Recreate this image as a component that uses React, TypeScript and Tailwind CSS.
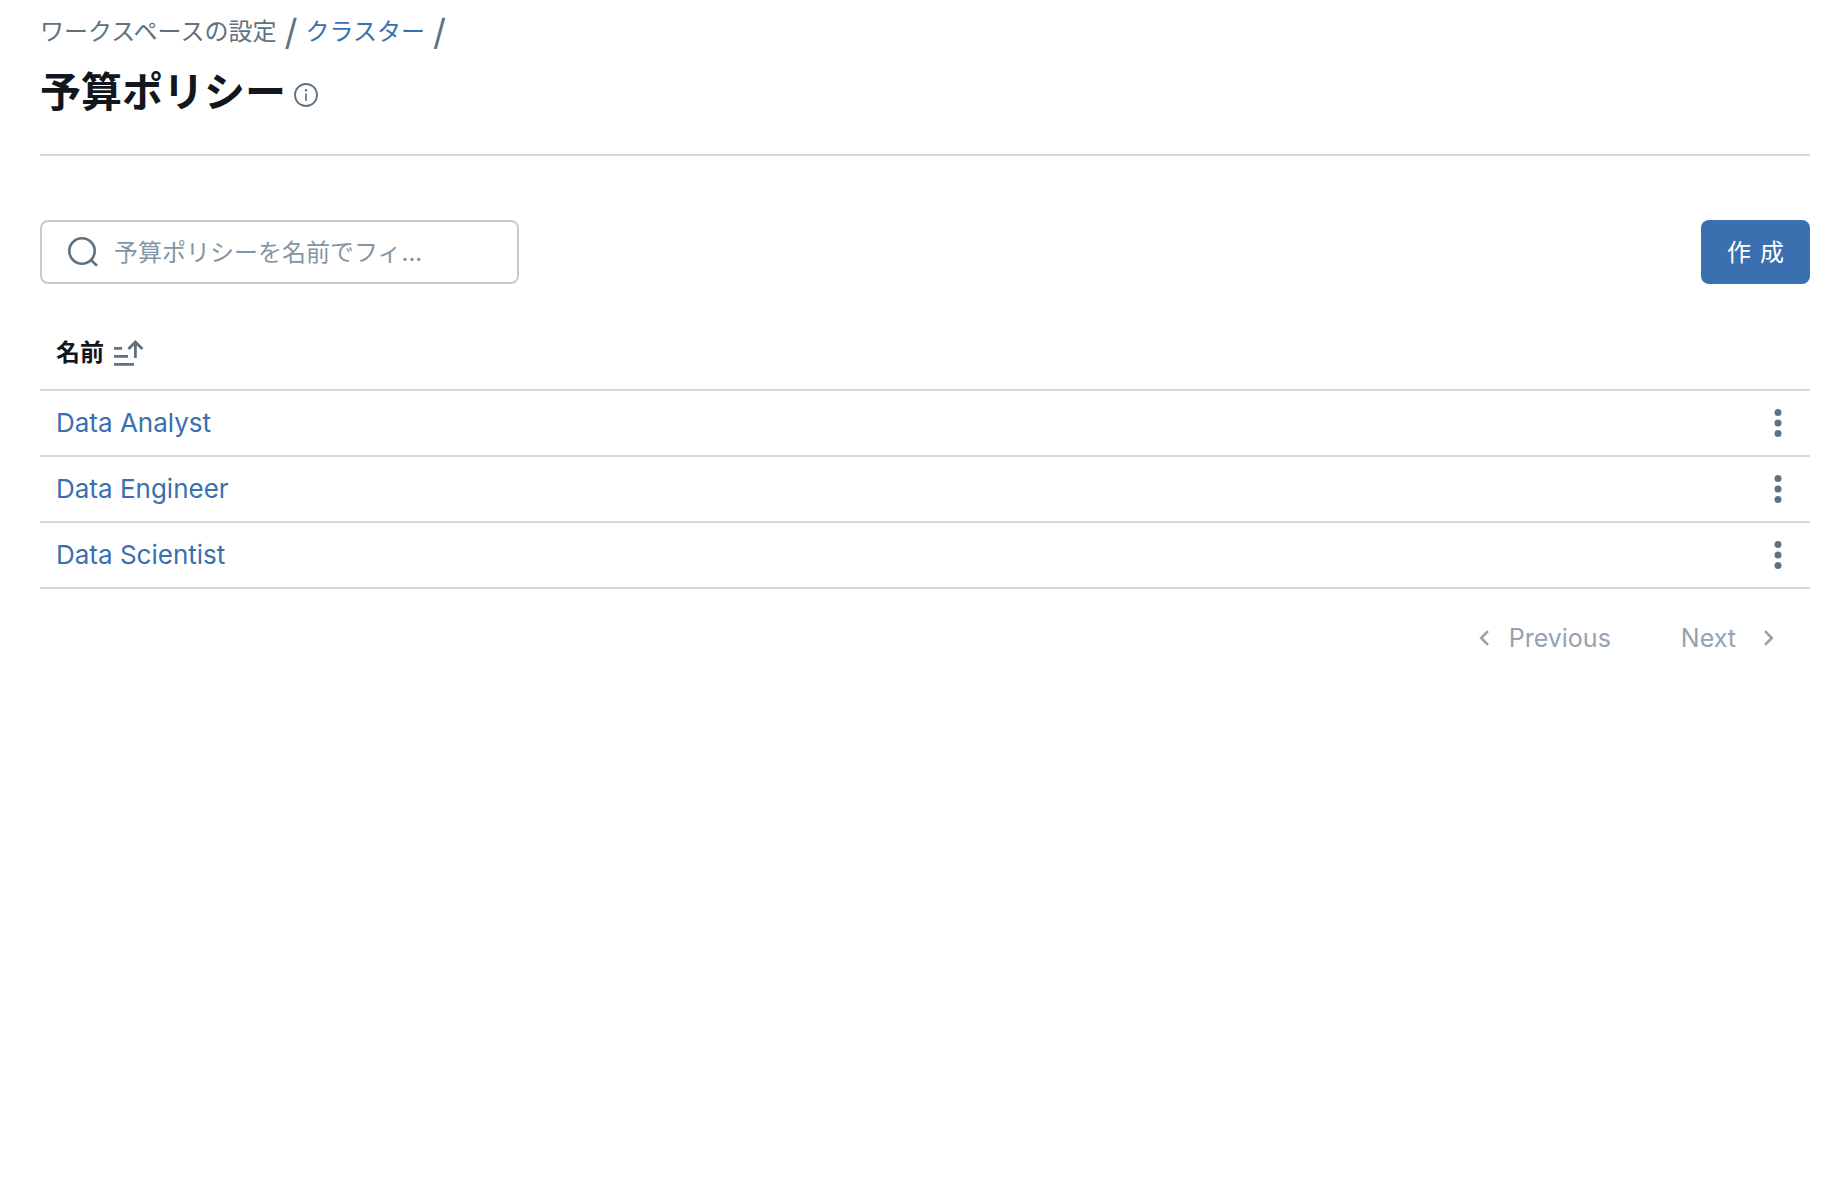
import { useState } from "react";

const policies = [
  { id: 1, name: "Data Analyst" },
  { id: 2, name: "Data Engineer" },
  { id: 3, name: "Data Scientist" },
];

function InfoIcon() {
  return (
    <svg width="24" height="24" viewBox="0 0 24 24" fill="none" aria-hidden="true">
      <circle cx="12" cy="12" r="11" stroke="currentColor" strokeWidth="1.8" />
      <path d="M12 10.5v7.5" stroke="currentColor" strokeWidth="1.6" />
      <circle cx="12" cy="7.2" r="1.2" fill="currentColor" />
    </svg>
  );
}

function SearchIcon() {
  return (
    <svg width="30" height="30" viewBox="0 0 30 30" fill="none" stroke="currentColor" strokeWidth="2.6" aria-hidden="true">
      <circle cx="14" cy="14" r="12.7" />
      <path d="M22.6 22.6l6.4 6.2" />
    </svg>
  );
}

function SortAscIcon() {
  return (
    <svg width="30" height="26" viewBox="0 0 30 26" fill="none" stroke="currentColor" strokeWidth="2.8" aria-hidden="true">
      <path d="M0 8.4h8M0 16.4h14M0 24.4h20" />
      <path d="M21.4 18V2M14.4 9l7-7 7 7" />
    </svg>
  );
}

function KebabIcon() {
  return (
    <svg width="8" height="28" viewBox="0 0 8 28" fill="currentColor" aria-hidden="true">
      <circle cx="4" cy="3.5" r="3.5" />
      <circle cx="4" cy="14" r="3.5" />
      <circle cx="4" cy="24.5" r="3.5" />
    </svg>
  );
}

function Chevron({ direction }: { direction: "left" | "right" }) {
  return (
    <svg width="10" height="16" viewBox="0 0 10 16" fill="none" stroke="currentColor" strokeWidth="2.6" aria-hidden="true">
      <path d={direction === "left" ? "M9 1.2L2.2 8 9 14.8" : "M1 1.2L7.8 8 1 14.8"} />
    </svg>
  );
}

export default function App() {
  const [query, setQuery] = useState("");
  const rows = policies.filter((p) => p.name.toLowerCase().includes(query.toLowerCase()));

  return (
    <main className="min-h-screen bg-white pt-3 pr-[38px] pl-10 font-['Inter','Noto_Sans_CJK_JP',sans-serif] text-2xl text-[#11171c]">
      {/* Page header */}
      <header className="border-b-2 border-[#d1d9e1] pb-[34px]">
        <nav aria-label="breadcrumb" className="flex h-10 items-center gap-2 text-[#5f7281]">
          <span>ワークスペースの設定</span>
          <span className="text-4xl leading-10">/</span>
          <a href="#clusters" className="text-[#3a6fb0]">クラスター</a>
          <span className="text-4xl leading-10">/</span>
        </nav>
        <div className="mt-3 flex items-center gap-2">
          <h1 className="text-[41px] leading-[56px] font-semibold">予算ポリシー</h1>
          <button type="button" aria-label="詳細情報" className="pt-1.5 text-[#5f7281]">
            <InfoIcon />
          </button>
        </div>
      </header>

      {/* Toolbar */}
      <div className="mt-16 flex items-center justify-between">
        <label className="flex h-16 w-[479px] items-center gap-4 rounded-lg border-2 border-[#c0cdd8] px-[26px] text-[#5f7281]">
          <SearchIcon />
          <input
            type="text"
            aria-label="予算ポリシーを名前でフィルター"
            placeholder="予算ポリシーを名前でフィ..."
            value={query}
            onChange={(e) => setQuery(e.target.value)}
            className="min-w-0 flex-1 pt-0.5 text-[#11171c] outline-none placeholder:text-[#8396a5]"
          />
        </label>
        <button type="button" className="flex h-16 items-center gap-[9px] rounded-lg bg-[#3a6fb0] px-[26px] pt-0.5 text-white">
          <span>作</span>
          <span>成</span>
        </button>
      </div>

      {/* Policy list */}
      <table className="mt-9 w-full border-collapse text-left">
        <thead>
          <tr className="h-[70px] border-b-2 border-[#d1d9e1]">
            <th scope="col" className="px-4 pb-1 font-semibold">
              <button type="button" className="flex items-center gap-2.5">
                名前
                <span className="text-[#5f7281]">
                  <SortAscIcon />
                </span>
              </button>
            </th>
            <th scope="col" className="w-16" aria-label="操作" />
          </tr>
        </thead>
        <tbody>
          {rows.map((p) => (
            <tr key={p.id} className="h-[66px] border-b-2 border-[#d1d9e1]">
              <td className="px-4">
                <a href={`#policy-${p.id}`} className="text-[26px] leading-8 text-[#3a6fb0]">
                  {p.name}
                </a>
              </td>
              <td>
                <button type="button" aria-label={`${p.name} のメニュー`} className="mr-7 ml-auto block text-[#5f7281]">
                  <KebabIcon />
                </button>
              </td>
            </tr>
          ))}
        </tbody>
      </table>

      {/* Pagination */}
      <div className="mt-8 flex justify-end gap-[70px] pr-9 text-[25px] leading-[34px] text-[#95a3b1]">
        <button type="button" disabled className="flex items-center gap-5">
          <Chevron direction="left" />
          Previous
        </button>
        <button type="button" disabled className="flex items-center gap-7">
          Next
          <Chevron direction="right" />
        </button>
      </div>
    </main>
  );
}
